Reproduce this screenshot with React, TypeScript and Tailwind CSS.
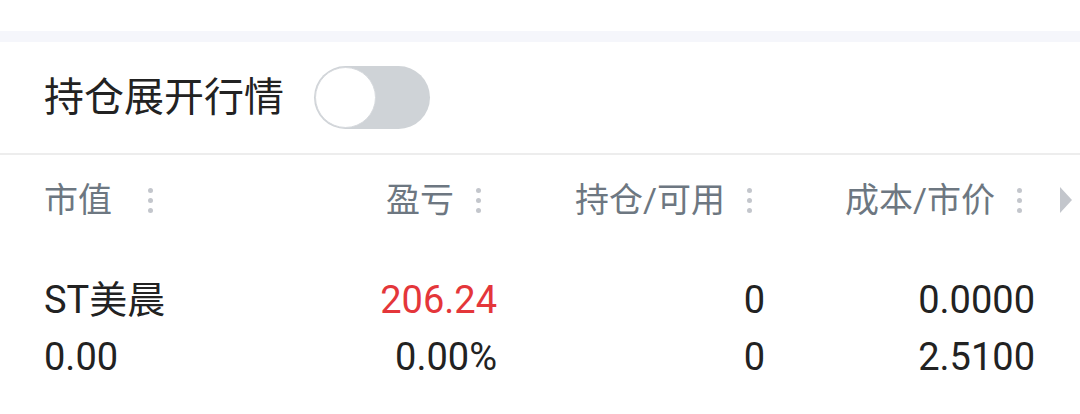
import { useState } from "react";

const columns = [
  { title: "市值", align: "left", pad: "" },
  { title: "盈亏", align: "right", pad: "pr-[16px]" },
  { title: "持仓/可用", align: "right", pad: "pr-[13px]" },
  { title: "成本/市价", align: "right", pad: "pr-[13px]" },
];

const rows = [
  [
    { text: "ST美晨", color: "text-[#222222]" },
    { text: "206.24", color: "text-[#e4363a]" },
    { text: "0", color: "text-[#222222]" },
    { text: "0.0000", color: "text-[#222222]" },
  ],
  [
    { text: "0.00", color: "text-[#222222]" },
    { text: "0.00%", color: "text-[#222222]" },
    { text: "0", color: "text-[#222222]" },
    { text: "2.5100", color: "text-[#222222]" },
  ],
];

// vertical "more" dots next to each column title
const MoreDots = () => (
  <div className="flex flex-col gap-[5px]">
    <span className="block w-[5px] h-[5px] rounded-full bg-[#c3c6cc]" />
    <span className="block w-[5px] h-[5px] rounded-full bg-[#c3c6cc]" />
    <span className="block w-[5px] h-[5px] rounded-full bg-[#c3c6cc]" />
  </div>
);

const Toggle = ({ on, onChange }: { on: boolean; onChange: () => void }) => (
  <button
    onClick={onChange}
    className={`flex items-center w-[116px] h-[63px] rounded-full p-[1px] ${
      on ? "bg-[#e4363a] justify-end" : "bg-[#cfd3d7] justify-start"
    }`}
  >
    <span className="block w-[61px] h-[61px] rounded-full bg-white border-[1.5px] border-[#d6d9dd]" />
  </button>
);

const App = () => {
  const [expanded, setExpanded] = useState(false);

  return (
    <div
      className="w-[1080px] h-[414px] bg-white overflow-hidden"
      style={{ fontFamily: 'Roboto, "Noto Sans CJK SC", sans-serif' }}
    >
      <div className="h-[31px]" />
      <div className="h-[11px] bg-[#f5f6fb]" />

      {/* toggle row */}
      <div className="flex items-center h-[113px] pl-[44px] border-b-2 border-[#ededed]">
        <span className="text-[40px] leading-none text-[#222222]">持仓展开行情</span>
        <div className="ml-[30px]">
          <Toggle on={expanded} onChange={() => setExpanded(!expanded)} />
        </div>
      </div>

      {/* column header */}
      <div className="flex items-center h-[90px] pl-[44px]">
        <div className="grid grid-cols-[256px_197px_268px_270px] w-[991px]">
          {columns.map((col, i) =>
            col.align === "left" ? (
              <div key={i} className="flex items-center">
                <span className="text-[34px] leading-none text-[#6d7781]">{col.title}</span>
                <div className="ml-[36px]">
                  <MoreDots />
                </div>
              </div>
            ) : (
              <div key={i} className={`flex items-center justify-end ${col.pad}`}>
                <span className="text-[34px] leading-none text-[#6d7781]">{col.title}</span>
                <div className="ml-[22px]">
                  <MoreDots />
                </div>
              </div>
            )
          )}
        </div>
        <svg width="14" height="28" viewBox="0 0 14 28" className="ml-[24px]">
          <path d="M1 1 L13 14 L1 27 Z" fill="#c3c6cc" />
        </svg>
      </div>

      {/* position rows */}
      <div className="pt-[26px] pl-[44px]">
        {rows.map((row, r) => (
          <div key={r} className="grid grid-cols-[256px_197px_268px_270px] w-[991px] h-[57px] items-center">
            {row.map((cell, c) => (
              <span
                key={c}
                className={`text-[38px] leading-none ${cell.color} ${c === 0 ? "text-left" : "text-right"}`}
              >
                {cell.text}
              </span>
            ))}
          </div>
        ))}
      </div>
    </div>
  );
};

export default App;
